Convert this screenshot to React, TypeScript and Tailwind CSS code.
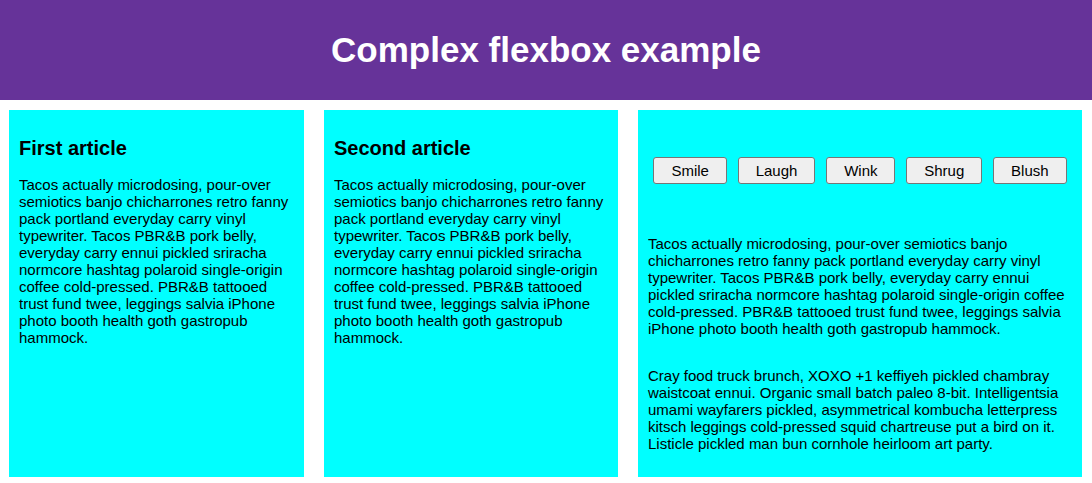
const lorem =
  "Tacos actually microdosing, pour-over semiotics banjo chicharrones retro fanny pack portland everyday carry vinyl typewriter. Tacos PBR&B pork belly, everyday carry ennui pickled sriracha normcore hashtag polaroid single-origin coffee cold-pressed. PBR&B tattooed trust fund twee, leggings salvia iPhone photo booth health goth gastropub hammock.";

const cray =
  "Cray food truck brunch, XOXO +1 keffiyeh pickled chambray waistcoat ennui. Organic small batch paleo 8-bit. Intelligentsia umami wayfarers pickled, asymmetrical kombucha letterpress kitsch leggings cold-pressed squid chartreuse put a bird on it. Listicle pickled man bun cornhole heirloom art party.";

const buttons = ["Smile", "Laugh", "Wink", "Shrug", "Blush"];

function SimpleArticle({ title, width }: { title: string; width: string }) {
  return (
    <article className={`${width} shrink-0 bg-[#00ffff] p-[10px]`}>
      <h2 className="my-[16.6px] text-[20px] font-bold leading-[23px]">{title}</h2>
      <p className="my-[15px] leading-[17px]">{lorem}</p>
    </article>
  );
}

export default function App() {
  return (
    <div className="min-h-screen bg-white text-[15px] text-black [font-family:'Liberation_Sans',Arial,sans-serif]">
      {/* header bar */}
      <header className="h-[100px] bg-[#663399]">
        <h1 className="m-0 text-center text-[35px] font-bold leading-[100px] text-white">
          Complex flexbox example
        </h1>
      </header>

      <section className="flex items-stretch gap-5 py-[10px] pl-[9px] pr-[10px]">
        <SimpleArticle title="First article" width="w-[295px]" />
        <SimpleArticle title="Second article" width="w-[294px]" />

        <article className="flex flex-1 flex-col bg-[#00ffff] p-[10px]">
          <div className="flex h-[100px] flex-row flex-wrap items-center justify-around">
            {buttons.map((b) => (
              <button
                key={b}
                className="mx-[5px] rounded-[3px] border border-[#767676] bg-[#efefef] px-[17px] py-[4px] text-[15px] leading-[17px] text-black"
              >
                {b}
              </button>
            ))}
          </div>
          <p className="my-[15px] leading-[17px]">{lorem}</p>
          <p className="my-[15px] leading-[17px]">{cray}</p>
        </article>
      </section>
    </div>
  );
}
